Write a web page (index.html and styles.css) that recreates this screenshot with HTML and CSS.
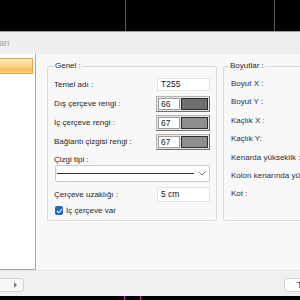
FILE: index.html
```html
<!DOCTYPE html>
<html>
<head>
<meta charset="utf-8">
<link rel="stylesheet" href="styles.css">
</head>
<body>
<div class="top">
  <div class="seg seg1"></div>
  <div class="seg seg2"></div>
</div>
<div class="titlebar">arı</div>
<div class="main">
  <div class="leftpanel">
    <div class="selitem"></div>
  </div>
  <div class="content">
    <fieldset class="group genel">
      <legend>Genel :</legend>
      <div class="row r19">
        <span class="lbl">Temel adı :</span>
        <span class="input inp13">T255</span>
      </div>
      <div class="row r19">
        <span class="lbl">Dış çerçeve rengi :</span>
        <span class="cbox"><span class="num">66</span><span class="sw dark"></span></span>
      </div>
      <div class="row r19">
        <span class="lbl">İç çerçeve rengi :</span>
        <span class="cbox"><span class="num">67</span><span class="sw mid"></span></span>
      </div>
      <div class="row r19">
        <span class="lbl">Bağlantı çizgisi rengi :</span>
        <span class="cbox"><span class="num">67</span><span class="sw mid"></span></span>
      </div>
      <div class="row rlabel">
        <span class="lbl">Çizgi tipi :</span>
      </div>
      <div class="combo">
        <span class="line"></span>
        <svg class="chev" width="8" height="5" viewBox="0 0 8 5"><path d="M0.5 0.5 L4 4 L7.5 0.5" fill="none" stroke="#8a8a8a" stroke-width="1"/></svg>
      </div>
      <div class="row r17">
        <span class="lbl">Çerçeve uzaklığı :</span>
        <span class="input inp15">5 cm</span>
      </div>
      <div class="row r15">
        <span class="check"><svg width="7" height="6" viewBox="0 0 7 6"><path d="M1 3 L2.8 4.8 L6 1" fill="none" stroke="#fff" stroke-width="1.1"/></svg></span>
        <span class="lbl">İç çerçeve var</span>
      </div>
    </fieldset>
    <fieldset class="group boyut">
      <legend>Boyutlar :</legend>
      <div class="brow">Boyut X :</div>
      <div class="brow">Boyut Y :</div>
      <div class="brow">Kaçlık X :</div>
      <div class="brow">Kaçlık Y:</div>
      <div class="brow">Kenarda yükseklik :</div>
      <div class="brow">Kolon kenarında yükseklik :</div>
      <div class="brow">Kot :</div>
    </fieldset>
  </div>
</div>
<div class="footer">
  <div class="btn btnleft"><span class="arrow"></span></div>
  <div class="spacer"></div>
  <div class="btn btnright">T</div>
</div>
<div class="bottom">
  <div class="tick t1"></div>
  <div class="tick t2"></div>
</div>
</body>
</html>
```
FILE: styles.css
```css
html, body {
  margin: 0;
  padding: 0;
}
body {
  width: 300px;
  height: 300px;
  overflow: hidden;
  font-family: "Liberation Sans", Arial, sans-serif;
  font-size: 8px;
  color: #1e1e1e;
  background: #f0f0f0;
}
.top {
  height: 31px;
  background: #000;
  display: flex;
}
.seg {
  height: 31px;
  border-right: 1px solid #5a5a5a;
  box-sizing: border-box;
}
.seg1 { width: 126px; }
.seg2 { width: 149px; }
.titlebar {
  height: 23px;
  box-sizing: border-box;
  border-top: 1px solid #9c9c9c;
  background: #efefef;
  color: #a2a2a2;
  font-size: 9px;
  line-height: 22px;
  padding-left: 0;
  text-indent: -1px;
}
.main {
  height: 216px;
  display: flex;
  background: #f8f8f8;
}
.leftpanel {
  width: 36px;
  box-sizing: border-box;
  background: #fff;
  border-right: 1px solid #a9a9a9;
  border-bottom: 1px solid #a9a9a9;
  padding-top: 4px;
}
.selitem {
  width: 33px;
  height: 16px;
  box-sizing: border-box;
  border: 1px solid #e7a648;
  border-left: none;
  background: linear-gradient(#fde6b3, #fcd48d 45%, #f9bc5a 80%, #fbcf80);
}
.content {
  flex: 1;
  display: flex;
  gap: 6px;
  padding: 7px 0 0 11px;
  overflow: hidden;
  align-items: flex-start;
}
.group {
  margin: 0;
  border: 1px solid #dadada;
  border-radius: 2px;
  box-sizing: border-box;
  height: 160px;
  flex-shrink: 0;
}
.group legend {
  padding: 0 1px;
  line-height: 10px;
  font-size: 8px;
  color: #1e1e2e;
}
.genel {
  width: 170px;
  padding: 4px 6px 2px 6px;
}
.boyut {
  width: 130px;
  padding: 4px 0 2px 7px;
}
.boyut legend {
  margin-left: -2px;
}
.row {
  display: flex;
  align-items: center;
}
.r19 { height: 19px; }
.r17 { height: 17px; margin-top: 4px; }
.r15 { height: 15px; }
.rlabel {
  height: 14px;
  align-items: flex-end;
  line-height: 10px;
}
.lbl {
  white-space: nowrap;
}
.input {
  margin-left: auto;
  width: 53px;
  box-sizing: border-box;
  background: #fff;
  border: 1px solid #e4e4e4;
  padding-left: 3px;
  color: #1a1a1a;
  font-size: 8.5px;
}
.inp13 { height: 13px; line-height: 11px; }
.inp15 { height: 15px; line-height: 13px; }
.cbox {
  margin-left: auto;
  width: 54px;
  height: 16px;
  box-sizing: border-box;
  display: flex;
  border: 1px solid #b4b4b4;
  border-right-color: #707070;
  border-bottom-color: #707070;
  background: #e6e6e6;
  padding: 1px;
  gap: 1px;
}
.num {
  width: 22px;
  box-sizing: border-box;
  background: #fff;
  border: 1px solid #9c9c9c;
  padding-left: 2px;
  line-height: 10px;
  font-size: 8.5px;
}
.sw {
  flex: 1;
  border: 1px solid #2e2e2e;
}
.sw.dark { background: #6f6f6f; }
.sw.mid { background: #8e8e8e; }
.combo {
  margin-left: 1px;
  height: 17px;
  box-sizing: border-box;
  border: 1px solid #c9c9c9;
  border-radius: 2px;
  background: #fff;
  display: flex;
  align-items: center;
  padding: 0 3px 0 1px;
}
.combo .line {
  width: 137px;
  height: 1px;
  background: #303030;
}
.chev {
  margin-left: auto;
}
.check {
  width: 8px;
  height: 9px;
  box-sizing: border-box;
  border-radius: 2px;
  background: #1d6ac4;
  display: flex;
  align-items: center;
  justify-content: center;
  margin: 0 3px 0 1px;
}
.check svg { display: block; }
.brow {
  height: 18.4px;
  line-height: 18.4px;
  white-space: nowrap;
  color: #2c2c48;
}
.footer {
  height: 26px;
  box-sizing: border-box;
  border-top: 1px solid #e4e4e4;
  background: #f0f0f0;
  display: flex;
  align-items: flex-start;
  padding-top: 7px;
}
.btn {
  height: 14px;
  box-sizing: border-box;
  border: 1px solid #d2d2d2;
  border-radius: 3px;
  background: #f8f8f8;
}
.btnleft {
  width: 30px;
  margin-left: -6px;
  display: flex;
  align-items: center;
  justify-content: flex-end;
  padding-right: 6px;
}
.arrow {
  width: 0;
  height: 0;
  border-left: 3px solid #7a7a7a;
  border-top: 3px solid transparent;
  border-bottom: 3px solid transparent;
}
.spacer { flex: 1; }
.btnright {
  width: 24px;
  margin-right: -8px;
  background: #fdfdfd;
  padding-left: 12px;
  line-height: 12px;
  font-size: 9px;
  color: #3a3428;
}
.bottom {
  height: 4px;
  background: #000;
  display: flex;
}
.tick {
  width: 1px;
  height: 4px;
  background: #c020c0;
}
.t1 { margin-left: 124px; }
.t2 { margin-left: 15px; }
```
